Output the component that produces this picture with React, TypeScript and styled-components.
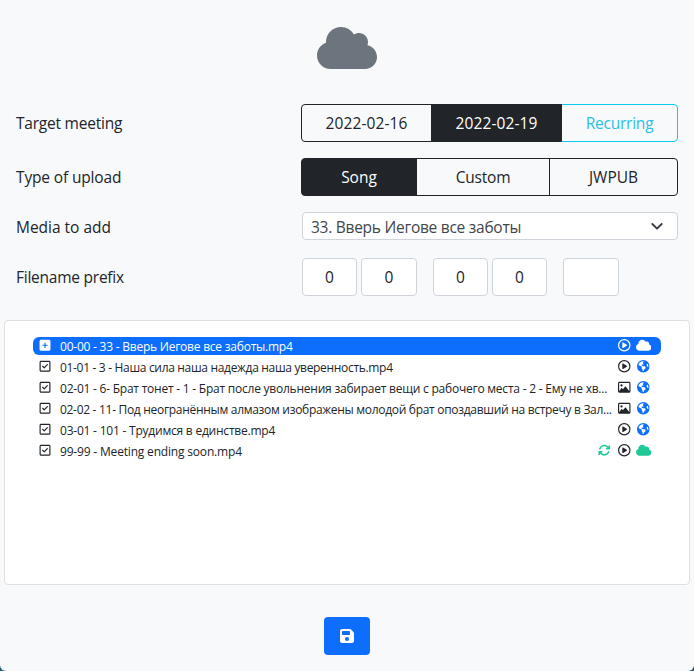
import React from "react";
import styled, { createGlobalStyle, css } from "styled-components";
import {
  FaArrowsRotate,
  FaCloud,
  FaEarthAmericas,
  FaFloppyDisk,
  FaRegCirclePlay,
  FaRegImage,
  FaRegSquareCheck,
  FaSquarePlus,
} from "react-icons/fa6";

const GlobalStyle = createGlobalStyle`
  *, *::before, *::after { box-sizing: border-box; }
  body {
    margin: 0;
    background: #245a72;
    color: #212529;
    font: 16px/24px "Open Sans", "Noto Sans", sans-serif;
  }
  button, input { font: inherit; }
`;

const Sheet = styled.main`
  display: flex;
  flex-direction: column;
  height: 671px;
  padding: 0 4px;
  background: #f8f9fb;
  border-radius: 0 0 6px 6px;
  overflow: hidden;
`;

const Header = styled.header`
  display: flex;
  justify-content: center;
  height: 104px;
  padding-top: 24px;
  color: #6c757d;
  svg { display: block; width: 60px; height: 48px; }
`;

const Form = styled.section`
  display: flex;
  flex-direction: column;
  height: 216px;
  padding-left: 12px;
`;

const Field = styled.div<{ $before?: number }>`
  display: grid;
  grid-template-columns: 285px 377px;
  align-items: center;
  margin-top: ${(p) => p.$before ?? 0}px;
`;

const Label = styled.label<{ $spacing?: number; $drop?: number }>`
  padding-top: ${(p) => p.$drop ?? 0}px;
  font-size: 15.5px;
  letter-spacing: ${(p) => p.$spacing ?? 0}px;
`;

const Group = styled.div<{ $columns: string }>`
  display: grid;
  grid-template-columns: ${(p) => p.$columns};
  height: 38px;
`;

const Option = styled.button<{ $active?: boolean; $info?: boolean; $spacing?: number }>`
  padding: 0;
  margin-left: -1px;
  border: 1px solid ${(p) => (p.$info ? "#0dcaf0" : "#212529")};
  background: ${(p) => (p.$active ? "#212529" : "transparent")};
  color: ${(p) => (p.$active ? "#fff" : p.$info ? "#29bfe8" : "#212529")};
  font-size: 15.5px;
  letter-spacing: ${(p) => p.$spacing ?? 0}px;
  z-index: ${(p) => (p.$active ? 1 : 0)};
  &:first-child { margin-left: 0; border-radius: 4px 0 0 4px; }
  &:last-child { border-radius: 0 4px 4px 0; }
`;

const field = css`
  border: 1px solid #ced4da;
  border-radius: 4px;
  background: #fff;
`;

const Select = styled.div`
  ${field}
  display: flex;
  align-items: center;
  justify-content: space-between;
  height: 28px;
  margin-left: 1px;
  padding: 2px 12px 0 8px;
  color: #41464b;
  font-size: 15.5px;
  letter-spacing: -0.26px;
  svg { width: 16px; height: 16px; margin-top: -3px; }
`;

const Digit = styled.input`
  ${field}
  width: 100%;
  height: 38px;
  padding: 0;
  color: #212529;
  text-align: center;
  font-size: 15.5px;
  outline: none;
`;

const PrefixRow = styled.div`
  display: flex;
  gap: 16px;
  padding-left: 1px;
`;

const Pair = styled.div<{ $columns: string }>`
  display: grid;
  grid-template-columns: ${(p) => p.$columns};
  gap: 4px;
`;

const Card = styled.section`
  height: 265px;
  padding: 15px 28px;
  border: 1px solid #dfdfdf;
  border-radius: 4px;
  background: #fff;
`;

const FileList = styled.ul`
  display: flex;
  flex-direction: column;
  gap: 3px;
  margin: 0;
  padding: 1px 0 0;
  list-style: none;
`;

const FileRow = styled.li<{ $active?: boolean }>`
  display: flex;
  align-items: center;
  height: 18px;
  padding: 0 8.5px 0 5px;
  border-radius: 6px;
  color: ${(p) => (p.$active ? "#fff" : "#212529")};
  background: ${(p) => (p.$active ? "#0d6efd" : "transparent")};
`;

const Mark = styled.span`
  display: flex;
  flex: none;
  width: 22px;
  padding-left: 0.5px;
  svg { width: 12px; height: 12.5px; margin-bottom: 2px; }
`;

const Name = styled.span<{ $spacing: number }>`
  flex: 1;
  min-width: 0;
  padding-top: 2px;
  font-size: 12px;
  line-height: 18px;
  letter-spacing: ${(p) => p.$spacing}px;
  white-space: nowrap;
`;

const Icons = styled.span`
  display: flex;
  flex: none;
  align-items: center;
  padding-bottom: 1px;
`;

const Slot = styled.span<{ $width: number; $tone?: string; $icon?: number }>`
  display: flex;
  justify-content: center;
  width: ${(p) => p.$width}px;
  color: ${(p) => p.$tone ?? "inherit"};
  svg { display: block; flex: none; width: ${(p) => p.$icon ?? 12.5}px; height: 12.5px; }
`;

const Footer = styled.footer`
  display: flex;
  justify-content: center;
  padding-top: 32px;
`;

const SaveButton = styled.button`
  display: flex;
  align-items: center;
  justify-content: center;
  width: 46px;
  height: 38px;
  padding: 0;
  border: 0;
  border-radius: 4px;
  background: #0d6efd;
  color: #fff;
`;

type Kind = "video" | "image";
type Source = "pending" | "web" | "cloud";
interface MediaFile {
  name: string;
  kind: Kind;
  source: Source;
  spacing: number;
  recurring?: boolean;
}

const files: MediaFile[] = [
  { name: "00-00 - 33 - Вверь Иегове все заботы.mp4", kind: "video", source: "pending", spacing: -0.23 },
  { name: "01-01 - 3 - Наша сила наша надежда наша уверенность.mp4", kind: "video", source: "web", spacing: -0.32 },
  { name: "02-01 - 6- Брат тонет - 1 - Брат после увольнения забирает вещи с рабочего места - 2 - Ему не хв...", kind: "image", source: "web", spacing: -0.23 },
  { name: "02-02 - 11- Под неогранённым алмазом изображены молодой брат опоздавший на встречу в Зал...", kind: "image", source: "web", spacing: -0.3 },
  { name: "03-01 - 101 - Трудимся в единстве.mp4", kind: "video", source: "web", spacing: -0.22 },
  { name: "99-99 - Meeting ending soon.mp4", kind: "video", source: "cloud", spacing: -0.18, recurring: true },
];

function FileItem({ file }: { file: MediaFile }) {
  const pending = file.source === "pending";
  const web = file.source === "web";
  return (
    <FileRow $active={pending}>
      <Mark>{pending ? <FaSquarePlus /> : <FaRegSquareCheck />}</Mark>
      <Name $spacing={file.spacing}>{file.name}</Name>
      <Icons>
        {file.recurring && <Slot $width={20} $tone="#20c997"><FaArrowsRotate /></Slot>}
        <Slot $width={20}>{file.kind === "video" ? <FaRegCirclePlay /> : <FaRegImage />}</Slot>
        <Slot $width={18} $icon={web ? 12.5 : 15.5} $tone={pending ? undefined : web ? "#0d6efd" : "#20c997"}>
          {web ? <FaEarthAmericas /> : <FaCloud />}
        </Slot>
      </Icons>
    </FileRow>
  );
}

export default function App() {
  return (
    <>
      <GlobalStyle />
      <Sheet>
        <Header><FaCloud /></Header>
        <Form>
          <Field>
            <Label $spacing={-0.22}>Target meeting</Label>
            <Group $columns="131px 130px 116px">
              <Option $spacing={0.1}>2022-02-16</Option>
              <Option $active $spacing={0.1}>2022-02-19</Option>
              <Option $info $spacing={-0.22}>Recurring</Option>
            </Group>
          </Field>
          <Field $before={16}>
            <Label $spacing={-0.15}>Type of upload</Label>
            <Group $columns="116px 133px 128px">
              <Option $active>Song</Option>
              <Option $spacing={-0.2}>Custom</Option>
              <Option>JWPUB</Option>
            </Group>
          </Field>
          <Field $before={16}>
            <Label $spacing={-0.02} $drop={1}>Media to add</Label>
            <Select>
              <span>33. Вверь Иегове все заботы</span>
              <svg viewBox="0 0 16 16" fill="none" stroke="#343a40" strokeWidth="1.8" strokeLinecap="round" strokeLinejoin="round">
                <path d="m3.3 6 4.7 4.7L12.7 6" />
              </svg>
            </Select>
          </Field>
          <Field $before={18}>
            <Label $spacing={-0.24}>Filename prefix</Label>
            <PrefixRow>
              <Pair $columns="55px 56px">
                <Digit defaultValue="0" />
                <Digit defaultValue="0" />
              </Pair>
              <Pair $columns="55px 55px">
                <Digit defaultValue="0" />
                <Digit defaultValue="0" />
              </Pair>
              <Pair $columns="56px">
                <Digit />
              </Pair>
            </PrefixRow>
          </Field>
        </Form>
        <Card>
          <FileList>
            {files.map((file) => <FileItem key={file.name} file={file} />)}
          </FileList>
        </Card>
        <Footer>
          <SaveButton aria-label="Save"><FaFloppyDisk /></SaveButton>
        </Footer>
      </Sheet>
    </>
  );
}
